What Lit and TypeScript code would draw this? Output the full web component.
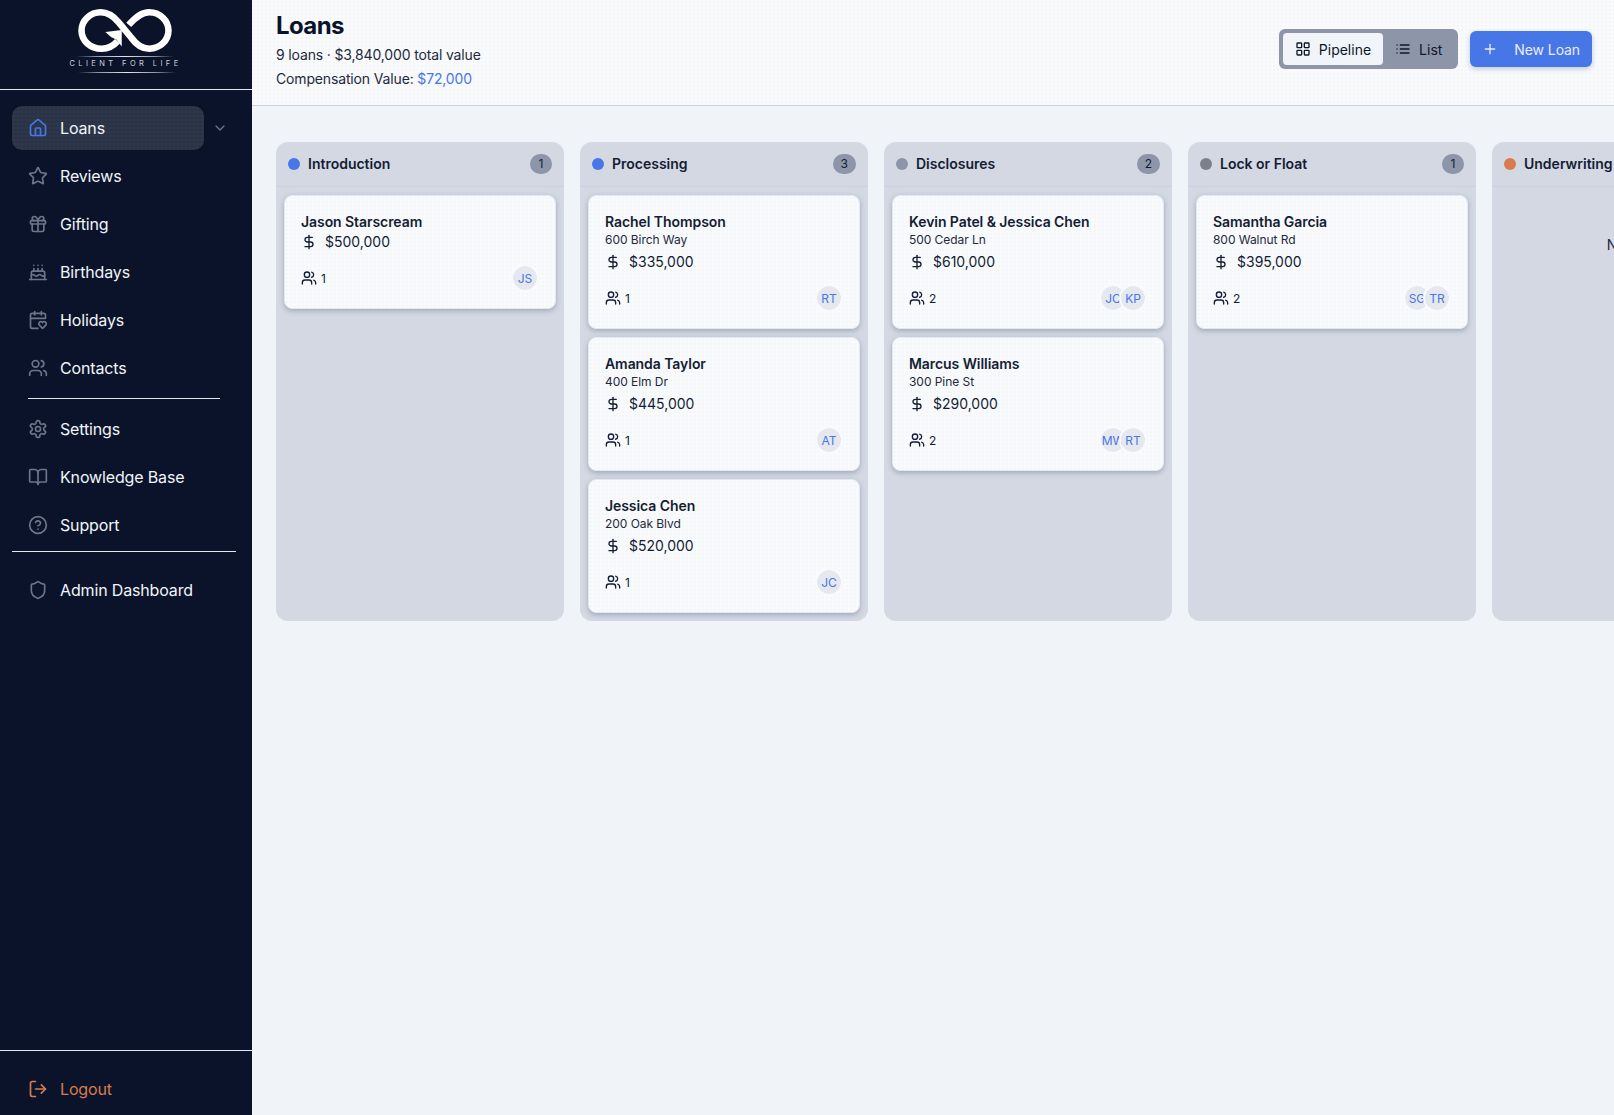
import { LitElement, html, css, svg } from "lit";
import { customElement } from "lit/decorators.js";

const I: Record<string, any> = {
  home: svg`<path d="M15 21v-8a1 1 0 0 0-1-1h-4a1 1 0 0 0-1 1v8"/><path d="M3 10a2 2 0 0 1 .709-1.528l7-5.999a2 2 0 0 1 2.582 0l7 5.999A2 2 0 0 1 21 10v9a2 2 0 0 1-2 2H5a2 2 0 0 1-2-2z"/>`,
  star: svg`<path d="M11.525 2.295a.53.53 0 0 1 .95 0l2.31 4.679a2.123 2.123 0 0 0 1.595 1.16l5.166.756a.53.53 0 0 1 .294.904l-3.736 3.638a2.123 2.123 0 0 0-.611 1.878l.882 5.14a.53.53 0 0 1-.771.56l-4.618-2.428a2.122 2.122 0 0 0-1.973 0L6.396 21.01a.53.53 0 0 1-.77-.56l.881-5.139a2.122 2.122 0 0 0-.611-1.879L2.16 9.795a.53.53 0 0 1 .294-.906l5.165-.755a2.122 2.122 0 0 0 1.597-1.16z"/>`,
  gift: svg`<rect x="3" y="8" width="18" height="4" rx="1"/><path d="M12 8v13"/><path d="M19 12v7a2 2 0 0 1-2 2H7a2 2 0 0 1-2-2v-7"/><path d="M7.5 8a2.5 2.5 0 0 1 0-5A4.8 8 0 0 1 12 8a4.8 8 0 0 1 4.5-5 2.5 2.5 0 0 1 0 5"/>`,
  cake: svg`<path d="M20 21v-8a2 2 0 0 0-2-2H6a2 2 0 0 0-2 2v8"/><path d="M4 16s.5-1 2-1 2.5 2 4 2 2.5-2 4-2 2.5 2 4 2 2-1 2-1"/><path d="M2 21h20"/><path d="M7 8v3"/><path d="M12 8v3"/><path d="M17 8v3"/><path d="M7 4h.01"/><path d="M12 4h.01"/><path d="M17 4h.01"/>`,
  cal: svg`<path d="M3 10h18V6a2 2 0 0 0-2-2H5a2 2 0 0 0-2 2v14a2 2 0 0 0 2 2h7"/><path d="M8 2v4"/><path d="M16 2v4"/><path d="M21.29 14.7a2.43 2.43 0 0 0-2.65-.52c-.3.12-.57.3-.8.53l-.34.34-.35-.34a2.43 2.43 0 0 0-2.65-.53c-.3.12-.56.3-.79.53-.95.94-1 2.53.2 3.74L17.5 22l3.6-3.55c1.2-1.21 1.14-2.8.19-3.74Z"/>`,
  users: svg`<path d="M16 21v-2a4 4 0 0 0-4-4H6a4 4 0 0 0-4 4v2"/><circle cx="9" cy="7" r="4"/><path d="M22 21v-2a4 4 0 0 0-3-3.87"/><path d="M16 3.13a4 4 0 0 1 0 7.75"/>`,
  gear: svg`<path d="M12.22 2h-.44a2 2 0 0 0-2 2v.18a2 2 0 0 1-1 1.73l-.43.25a2 2 0 0 1-2 0l-.15-.08a2 2 0 0 0-2.73.73l-.22.38a2 2 0 0 0 .73 2.73l.15.1a2 2 0 0 1 1 1.72v.51a2 2 0 0 1-1 1.74l-.15.09a2 2 0 0 0-.73 2.73l.22.38a2 2 0 0 0 2.73.73l.15-.08a2 2 0 0 1 2 0l.43.25a2 2 0 0 1 1 1.73V20a2 2 0 0 0 2 2h.44a2 2 0 0 0 2-2v-.18a2 2 0 0 1 1-1.73l.43-.25a2 2 0 0 1 2 0l.15.08a2 2 0 0 0 2.73-.73l.22-.39a2 2 0 0 0-.73-2.73l-.15-.08a2 2 0 0 1-1-1.74v-.5a2 2 0 0 1 1-1.74l.15-.09a2 2 0 0 0 .73-2.73l-.22-.38a2 2 0 0 0-2.73-.73l-.15.08a2 2 0 0 1-2 0l-.43-.25a2 2 0 0 1-1-1.73V4a2 2 0 0 0-2-2z"/><circle cx="12" cy="12" r="3"/>`,
  book: svg`<path d="M12 7v14"/><path d="M3 18a1 1 0 0 1-1-1V4a1 1 0 0 1 1-1h5a4 4 0 0 1 4 4 4 4 0 0 1 4-4h5a1 1 0 0 1 1 1v13a1 1 0 0 1-1 1h-6a3 3 0 0 0-3 3 3 3 0 0 0-3-3z"/>`,
  help: svg`<circle cx="12" cy="12" r="10"/><path d="M9.09 9a3 3 0 0 1 5.83 1c0 2-3 3-3 3"/><path d="M12 17h.01"/>`,
  shield: svg`<path d="M20 13c0 5-3.5 7.5-7.66 8.95a1 1 0 0 1-.67-.01C7.5 20.5 4 18 4 13V6a1 1 0 0 1 1-1c2 0 4.5-1.2 6.24-2.72a1.17 1.17 0 0 1 1.52 0C14.51 3.81 17 5 19 5a1 1 0 0 1 1 1z"/>`,
  logout: svg`<path d="M9 21H5a2 2 0 0 1-2-2V5a2 2 0 0 1 2-2h4"/><polyline points="16 17 21 12 16 7"/><line x1="21" y1="12" x2="9" y2="12"/>`,
  chevron: svg`<path d="m6 9 6 6 6-6"/>`,
  grid: svg`<rect x="3" y="3" width="7" height="7" rx="1"/><rect x="14" y="3" width="7" height="7" rx="1"/><rect x="14" y="14" width="7" height="7" rx="1"/><rect x="3" y="14" width="7" height="7" rx="1"/>`,
  list: svg`<path d="M3 12h.01"/><path d="M3 18h.01"/><path d="M3 6h.01"/><path d="M8 12h13"/><path d="M8 18h13"/><path d="M8 6h13"/>`,
  plus: svg`<path d="M5 12h14"/><path d="M12 5v14"/>`,
  dollar: svg`<line x1="12" y1="2" x2="12" y2="22"/><path d="M17 5H9.5a3.5 3.5 0 0 0 0 7h5a3.5 3.5 0 0 1 0 7H6"/>`,
};

const icon = (name: string, size: number, sw = 2) => html`<svg class="ic" width=${size} height=${size} viewBox="0 0 24 24" fill="none" stroke="currentColor" stroke-width=${sw} stroke-linecap="round" stroke-linejoin="round">${I[name]}</svg>`;

interface Loan { name: string; addr?: string; amount: string; people: number; av: string[] }
interface Col { title: string; dot: string; count: number; loans: Loan[] }

const cols: Col[] = [
  { title: "Introduction", dot: "#4776e6", count: 1, loans: [
    { name: "Jason Starscream", amount: "$500,000", people: 1, av: ["JS"] },
  ]},
  { title: "Processing", dot: "#4776e6", count: 3, loans: [
    { name: "Rachel Thompson", addr: "600 Birch Way", amount: "$335,000", people: 1, av: ["RT"] },
    { name: "Amanda Taylor", addr: "400 Elm Dr", amount: "$445,000", people: 1, av: ["AT"] },
    { name: "Jessica Chen", addr: "200 Oak Blvd", amount: "$520,000", people: 1, av: ["JC"] },
  ]},
  { title: "Disclosures", dot: "#8d95a8", count: 2, loans: [
    { name: "Kevin Patel & Jessica Chen", addr: "500 Cedar Ln", amount: "$610,000", people: 2, av: ["JC", "KP"] },
    { name: "Marcus Williams", addr: "300 Pine St", amount: "$290,000", people: 2, av: ["MW", "RT"] },
  ]},
  { title: "Lock or Float", dot: "#7a808c", count: 1, loans: [
    { name: "Samantha Garcia", addr: "800 Walnut Rd", amount: "$395,000", people: 2, av: ["SG", "TR"] },
  ]},
  { title: "Underwriting", dot: "#d97b4f", count: 0, loans: [] },
];

const nav1 = [["star","Reviews"],["gift","Gifting"],["cake","Birthdays"],["cal","Holidays"],["users","Contacts"]];
const nav2 = [["gear","Settings"],["book","Knowledge Base"],["help","Support"]];

@customElement("app-root")
export class AppRoot extends LitElement {
  static styles = css`
    :host { display: block; width: 100%; height: 1115px; font-family: Inter, "Liberation Sans", sans-serif; color: #0f172a; }
    * { box-sizing: border-box; }
    .ic { display: block; flex: none; }
    .app { display: flex; height: 1115px; overflow: hidden; background: #f0f4f8; }
    .side { width: 252px; flex: none; background: #0a132a; display: flex; flex-direction: column; color: #f1f5f9; }
    .brand { height: 90px; border-bottom: 1px solid #e2e8f0; display: flex; flex-direction: column; align-items: center; padding: 9px 3px 0 0; flex: none; }
    .brand svg { display: block; }
    .tag { font-size: 7.5px; letter-spacing: 3.4px; line-height: 9px; color: #c9ced8; white-space: nowrap; margin: 2px 0 0 2px; }
    .rule { height: 1px; background: linear-gradient(90deg, transparent, #8b93a3 20%, #e5e7eb 50%, #8b93a3 80%, transparent); flex: none; }
    .rule.a { width: 98px; margin-top: 4px; }
    .rule.b { width: 98px; margin-top: 4px; margin-left: 4px; }
    .nav { flex: 1; padding: 16px 16px 16px 12px; display: flex; flex-direction: column; gap: 4px; }
    .row { display: flex; align-items: center; }
    .item { height: 44px; width: 192px; display: flex; align-items: center; gap: 12px; padding: 0 16px; border-radius: 10px; font-size: 16px; letter-spacing: -0.15px; color: #f1f5f9; white-space: nowrap; }
    .item .ic { color: #6b7689; }
    .item.active { background-color: #2b3446; background-image: radial-gradient(circle, rgba(148,163,184,.1) 0.6px, transparent 0.8px); background-size: 4px 4px; }
    .item.active .ic { color: #4776e6; }
    .chev { margin-left: 8px; color: #6b7689; }
    .div1 { height: 1px; background: #e2e8f0; margin: 4px 16px; }
    .div2 { height: 1px; background: #e2e8f0; margin: 0 0 12px; }
    .foot { border-top: 1px solid #e2e8f0; padding: 16px 12px; flex: none; height: 65px; }
    .foot .item { color: #d97b4f; }
    .foot .item .ic { color: #d97b4f; }
    .main { flex: 1; min-width: 0; display: flex; flex-direction: column; overflow: hidden; }
    .head { height: 106px; flex: none; border-bottom: 1px solid #cbd1de; display: flex; justify-content: space-between; padding: 12px 22px 0 24px; background-color: #f8fafc; background-image: radial-gradient(circle, rgba(100,116,139,.06) 0.6px, transparent 0.8px); background-size: 4px 4px; }
    h1 { margin: 0; font-size: 24px; line-height: 28px; font-weight: 700; letter-spacing: -0.6px; color: #0a132a; }
    .sub { font-size: 14px; line-height: 20px; margin-top: 5px; letter-spacing: -0.15px; color: #1e293b; }
    .sub + .sub { margin-top: 4px; }
    .blue { color: #4776e6; }
    .acts { display: flex; align-items: flex-start; gap: 12px; padding-top: 17px; }
    .toggle { display: flex; padding: 4px; background: #8d95a8; border-radius: 6px; height: 40px; }
    .tbtn { height: 32px; display: flex; align-items: center; gap: 8px; padding: 0 12px; font-size: 14px; border-radius: 4px; color: #0f172a; }
    .tbtn.on { background: #f1f5f9; }
    .new { margin-top: 2px; height: 36px; display: flex; align-items: center; gap: 16px; padding: 0 12px; border-radius: 6px; background: #4776e6; color: #e8eefb; font-size: 14px; letter-spacing: -0.1px; box-shadow: 0 2px 5px rgba(71,85,125,.3); }
    .board { display: flex; gap: 16px; padding: 36px 0 0 24px; align-items: stretch; }
    .col { width: 288px; flex: none; background: #d3d8e3; border-radius: 12px; }
    .chead { height: 45px; border-bottom: 1px solid #ccd1dd; padding: 0 12px 1px; display: flex; align-items: center; gap: 8px; font-size: 14px; font-weight: 600; color: #141d33; white-space: nowrap; }
    .dot { width: 12px; height: 12px; border-radius: 50%; flex: none; }
    .badge { margin-left: auto; height: 20px; min-width: 22px; padding: 0 8px; border-radius: 10px; background: #8d95a8; font-size: 12px; font-weight: 400; line-height: 20px; text-align: center; }
    .cards { padding: 8px; display: flex; flex-direction: column; gap: 8px; }
    .empty { padding-top: 48px; text-align: center; font-size: 14px; line-height: 20px; white-space: nowrap; color: #1e293b; }
    .card { border: 1px solid #e2e8f0; border-radius: 8px; padding: 16px; background-color: #f8fafc; background-image: radial-gradient(circle, rgba(100,116,139,.06) 0.6px, transparent 0.8px); background-size: 4px 4px; box-shadow: 0 2px 5px rgba(71,85,105,.35); }
    .name { font-size: 14px; font-weight: 600; line-height: 20px; letter-spacing: -0.07px; color: #141d33; }
    .addr { font-size: 12px; line-height: 16px; margin-bottom: 4px; letter-spacing: -0.05px; color: #1e293b; }
    .amt { display: flex; align-items: center; gap: 8px; font-size: 14px; line-height: 20px; color: #141d33; }
    .cfoot { display: flex; justify-content: space-between; align-items: center; margin-top: 12px; }
    .ppl { display: flex; align-items: center; gap: 4px; font-size: 12px; color: #141d33; }
    .avs { display: flex; }
    .av { width: 28px; height: 28px; border-radius: 50%; border: 2px solid #f8fafc; background: #e5e8ee; background-clip: padding-box; color: #4776e6; font-size: 12px; display: flex; align-items: center; justify-content: center; white-space: nowrap; position: relative; }
    .av + .av { margin-left: -8px; }
  `;

  private logo() {
    return html`<svg width="94" height="43" viewBox="0 0 100 46" fill="none" stroke="#fff" stroke-linecap="butt">
      <path stroke-width="7" d="M42 34.5 C38 39 32 42.5 25 42.5 C13 42.5 3.5 34 3.5 23 C3.5 12 13 3.5 24 3.5 C32 3.5 38 8 43 14 L57 31 C62 38 68 42.5 76 42.5 C87 42.5 96.5 34 96.5 23 C96.5 12 87 3.5 76 3.5 C68 3.5 62 8 54 17"/>
      <path fill="#fff" stroke="none" d="M29 24.5 L46.5 22.5 L46.5 40 L41 33 L35 30 Z"/>
    </svg>`;
  }

  render() {
    const it = (n: string[]) => html`<div class="item">${icon(n[0], 20, 2)}<span>${n[1]}</span></div>`;
    return html`<div class="app">
      <aside class="side">
        <div class="brand">
          ${this.logo()}
          <div class="rule a"></div>
          <div class="tag">CLIENT FOR LIFE</div>
          <div class="rule b"></div>
        </div>
        <nav class="nav">
          <div class="row"><div class="item active">${icon("home", 20, 2)}<span>Loans</span></div><span class="chev">${icon("chevron", 16, 2)}</span></div>
          ${nav1.map(it)}
          <div class="div1"></div>
          ${nav2.map(it)}
          <div class="div2"></div>
          ${it(["shield", "Admin Dashboard"])}
        </nav>
        <div class="foot"><div class="item">${icon("logout", 20, 2)}<span>Logout</span></div></div>
      </aside>
      <main class="main">
        <header class="head">
          <div>
            <h1>Loans</h1>
            <div class="sub">9 loans · $3,840,000 total value</div>
            <div class="sub">Compensation Value: <span class="blue">$72,000</span></div>
          </div>
          <div class="acts">
            <div class="toggle">
              <div class="tbtn on">${icon("grid", 16)}Pipeline</div>
              <div class="tbtn">${icon("list", 16)}List</div>
            </div>
            <div class="new">${icon("plus", 16)}New Loan</div>
          </div>
        </header>
        <section class="board">
          ${cols.map(c => html`<div class="col">
            <div class="chead"><span class="dot" style="background:${c.dot}"></span>${c.title}<span class="badge">${c.count}</span></div>
            ${c.loans.length ? html`<div class="cards">
              ${c.loans.map(l => html`<article class="card">
                <div class="name">${l.name}</div>
                ${l.addr ? html`<div class="addr">${l.addr}</div>` : ""}
                <div class="amt">${icon("dollar", 16)}${l.amount}</div>
                <div class="cfoot">
                  <div class="ppl">${icon("users", 16)}${l.people}</div>
                  <div class="avs">${l.av.map(a => html`<span class="av">${a}</span>`)}</div>
                </div>
              </article>`)}
            </div>` : html`<div class="empty">No loans</div>`}
          </div>`)}
        </section>
      </main>
    </div>`;
  }
}
